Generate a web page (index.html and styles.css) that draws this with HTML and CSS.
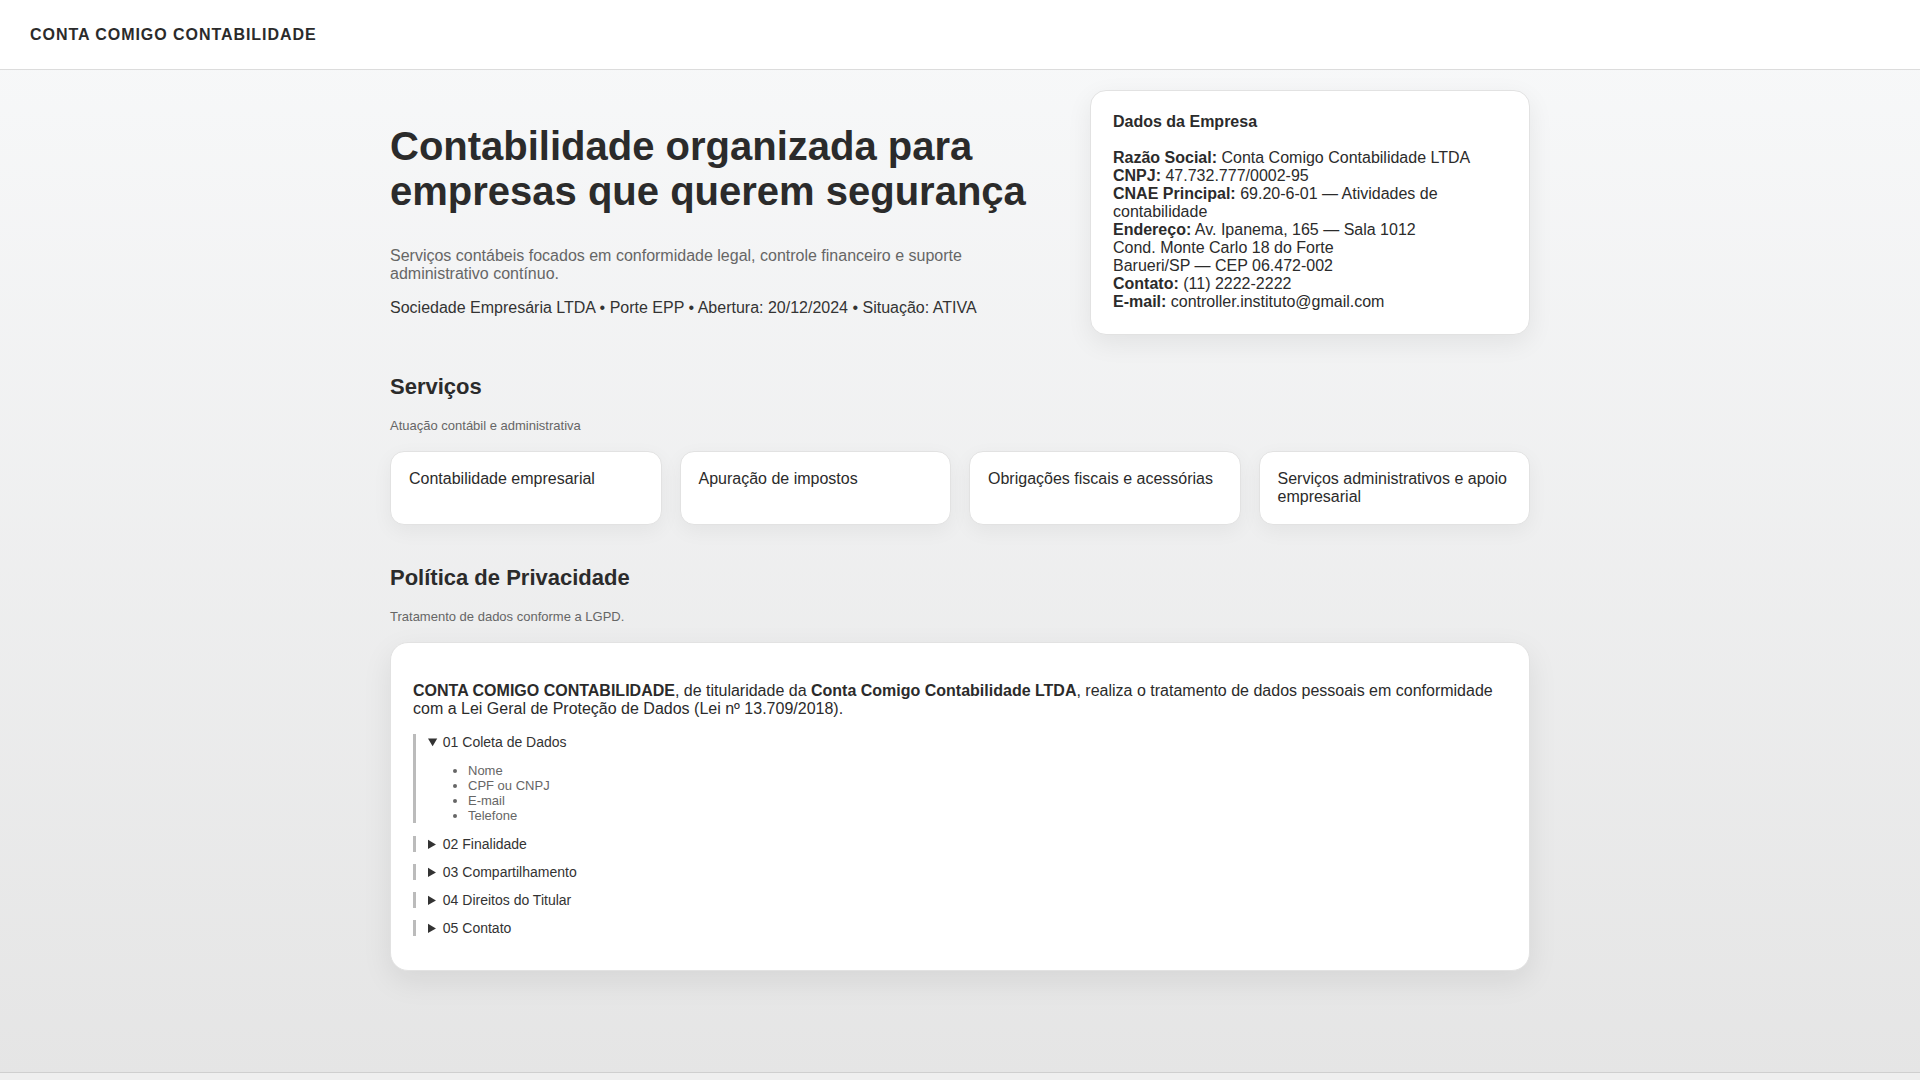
FILE: index.html
```html
<!DOCTYPE html>
<html lang="pt-BR">
<head>
    <meta charset="UTF-8">
    <meta name="viewport" content="width=device-width, initial-scale=1.0">
    <title>Conta Comigo Contabilidade</title>
<link rel="stylesheet" href="styles.css">
</head>
<body>
<header class="topbar">
    <div class="brand">CONTA COMIGO CONTABILIDADE</div>
</header>

<main class="page">
    <!-- topo: chamada + dados da empresa -->
    <section class="hero">
        <div class="hero-text">
            <h1>Contabilidade organizada para empresas que querem segurança</h1>
            <p class="lead">Serviços contábeis focados em conformidade legal, controle financeiro e suporte administrativo contínuo.</p>
            <p class="meta">Sociedade Empresária LTDA • Porte EPP • Abertura: 20/12/2024 • Situação: ATIVA</p>
        </div>
        <aside class="company">
            <h3>Dados da Empresa</h3>
            <div><strong>Razão Social:</strong> Conta Comigo Contabilidade LTDA</div>
            <div><strong>CNPJ:</strong> 47.732.777/0002-95</div>
            <div><strong>CNAE Principal:</strong> 69.20-6-01 — Atividades de contabilidade</div>
            <div><strong>Endereço:</strong> Av. Ipanema, 165 — Sala 1012</div>
            <div>Cond. Monte Carlo 18 do Forte</div>
            <div>Barueri/SP — CEP 06.472-002</div>
            <div><strong>Contato:</strong> (11) 2222-2222</div>
            <div><strong>E-mail:</strong> controller.instituto@gmail.com</div>
        </aside>
    </section>

    <!-- servicos -->
    <section class="block">
        <h2>Serviços</h2>
        <p class="sub">Atuação contábil e administrativa</p>
        <div class="services">
            <div class="service">Contabilidade empresarial</div>
            <div class="service">Apuração de impostos</div>
            <div class="service">Obrigações fiscais e acessórias</div>
            <div class="service">Serviços administrativos e apoio empresarial</div>
        </div>
    </section>

    <!-- LGPD -->
    <section class="block">
        <h2>Política de Privacidade</h2>
        <p class="sub">Tratamento de dados conforme a LGPD.</p>
        <div class="privacy">
            <p><strong>CONTA COMIGO CONTABILIDADE</strong>, de titularidade da <strong>Conta Comigo Contabilidade LTDA</strong>, realiza o tratamento de dados pessoais em conformidade com a Lei Geral de Proteção de Dados (Lei nº 13.709/2018).</p>

            <details open>
                <summary>01 Coleta de Dados</summary>
                <ul>
                    <li>Nome</li>
                    <li>CPF ou CNPJ</li>
                    <li>E-mail</li>
                    <li>Telefone</li>
                </ul>
            </details>
            <details>
                <summary>02 Finalidade</summary>
                <ul>
                    <li>Prestação dos serviços contábeis contratados</li>
                    <li>Cumprimento de obrigações legais e fiscais</li>
                    <li>Comunicação com o cliente</li>
                </ul>
            </details>
            <details>
                <summary>03 Compartilhamento</summary>
                <ul>
                    <li>Órgãos públicos, quando exigido por lei</li>
                    <li>Não vendemos nem cedemos dados a terceiros</li>
                </ul>
            </details>
            <details>
                <summary>04 Direitos do Titular</summary>
                <ul>
                    <li>Acesso, correção e exclusão dos dados</li>
                    <li>Revogação do consentimento</li>
                </ul>
            </details>
            <details>
                <summary>05 Contato</summary>
                <ul>
                    <li>controller.instituto@gmail.com</li>
                    <li>(11) 2222-2222</li>
                </ul>
            </details>
        </div>
    </section>
</main>

<footer class="foot"></footer>
</body>
</html>
```

FILE: styles.css
```css
* {box-sizing: border-box;}
body {margin: 0; font-family: "Liberation Sans", Arial, sans-serif; color: #2b2b2b;
    background: linear-gradient(180deg, #f8f9fa 0%, #e4e4e4 100%);}
h1, h2, h3, p {margin: 0;}

/* topo */
.topbar {height: 70px; display: flex; align-items: center; padding: 0 30px;
    background: #fff; border-bottom: 1px solid #dcdcdc;}
.brand {font-size: 16px; font-weight: bold; letter-spacing: 0.95px; color: #2b2b2b;}

.page {max-width: 1140px; margin: 0 auto; padding: 20px 0 101px;}

/* hero */
.hero {display: grid; grid-template-columns: 1fr 440px; gap: 40px; align-items: start;}
.hero-text h1 {font-size: 40px; line-height: 45px; margin: 34px 0 33px; color: #2b2b2b;}
.hero-text .lead {font-size: 16px; color: #666; margin-bottom: 16px;}
.hero-text .meta {font-size: 16px; color: #333;}

.company {background: #fff; border: 1px solid #e2e2e2; border-radius: 16px; padding: 22px 22px 23px;
    box-shadow: 0 8px 26px rgba(0,0,0,0.07); font-size: 16px; color: #2b2b2b;}
.company h3 {font-size: 16px; margin-bottom: 18px;}

/* secoes */
.block {margin-top: 39px;}
.block + .block {margin-top: 40px;}
.block h2 {font-size: 22px; margin-bottom: 18px; color: #2b2b2b;}
.block .sub {font-size: 13px; color: #666; margin-bottom: 18px;}

.services {display: grid; grid-template-columns: repeat(4, 1fr); gap: 18px;}
.service {background: #fff; border: 1px solid #e2e2e2; border-radius: 14px; padding: 18px;
    font-size: 16px; color: #2b2b2b; box-shadow: 0 6px 20px rgba(0,0,0,0.05);}

.privacy {background: #fff; border: 1px solid #e2e2e2; border-radius: 18px; padding: 22px;
    box-shadow: 0 10px 30px rgba(0,0,0,0.08);}
.privacy p {font-size: 16px; margin: 17px 0 16px;}
.privacy details {border-left: 3px solid #bbb; padding-left: 12px; margin-bottom: 12px;}
.privacy summary {font-size: 14px; color: #333; cursor: pointer;}
.privacy ul {font-size: 13px; color: #666; margin: 13px 0;}

.foot {border-top: 1px solid #cfcfcf; background: #efefef; min-height: 60px;}
```
